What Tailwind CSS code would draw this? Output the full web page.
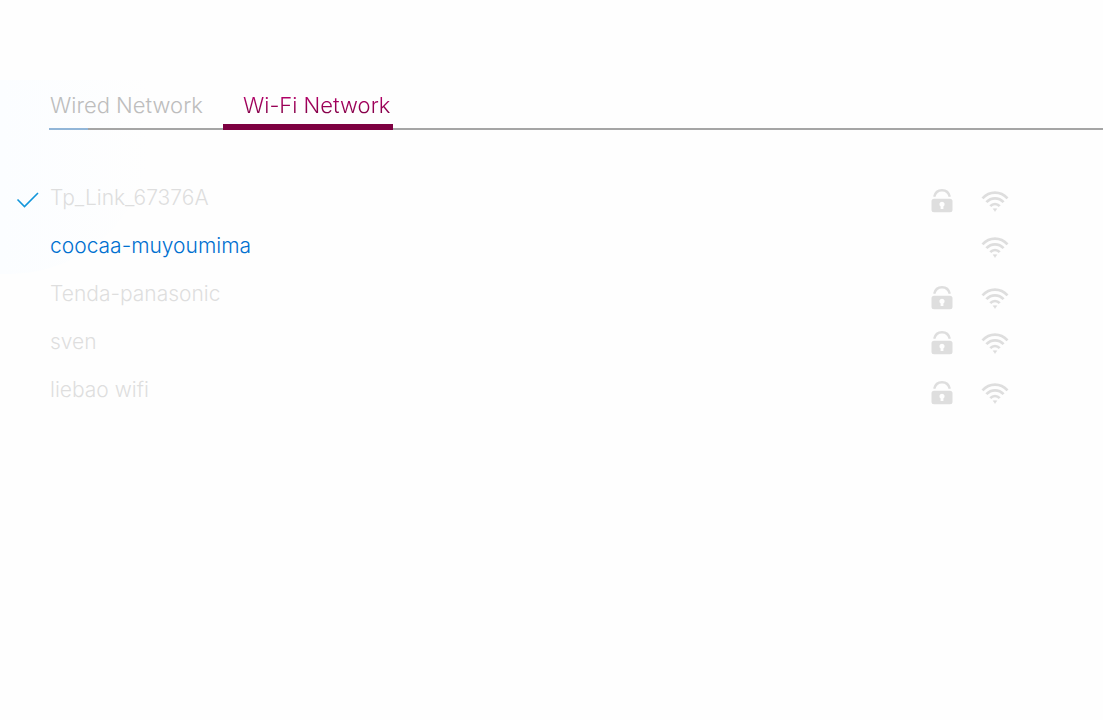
<!DOCTYPE html>
<html lang="en">
<head>
<meta charset="utf-8">
<meta name="viewport" content="width=device-width, initial-scale=1">
<title>Network</title>
<script src="https://cdn.jsdelivr.net/npm/@tailwindcss/browser@4"></script>
</head>
<body class="relative min-h-screen overflow-x-hidden bg-[#fefefe] pt-20 font-['Inter','Liberation_Sans',sans-serif] text-[22px] leading-[30px] font-light text-[#dedede]">
<svg width="0" height="0" class="absolute" aria-hidden="true">
  <symbol id="lock" viewBox="0 0 24 26">
    <path d="M4.200 8.800C5.200 4.500 8.200 2.300 12 2.300S18.800 4.500 19.800 8.800" fill="none" stroke="currentColor" stroke-width="2.400"/>
    <path fill="currentColor" fill-rule="evenodd" d="M4 10.800H20a2.500 2.500 0 0 1 2.500 2.500V21.700A2.500 2.500 0 0 1 20 24.200H4A2.500 2.500 0 0 1 1.500 21.700V13.300A2.500 2.500 0 0 1 4 10.800ZM12 13.700a2.600 2.600 0 0 0-1.400 4.800V21h2.800V18.500A2.600 2.600 0 0 0 12 13.700Z"/>
  </symbol>
  <symbol id="wifi" viewBox="0 0 28 24">
    <g fill="none" stroke="currentColor" stroke-width="2.700">
      <path d="M1.500 9.300C8.500 1.600 19.500 1.600 26.500 9.300"/>
      <path d="M5.400 13.200C10.200 8 17.800 8 22.600 13.200"/>
      <path d="M9.300 17.100C11.900 14.300 16.100 14.300 18.700 17.100"/>
    </g>
    <path d="M12.200 19.700H15.800L14 22.400Z" fill="currentColor" stroke="currentColor" stroke-width=".6" stroke-linejoin="round"/>
  </symbol>
</svg>
<div class="absolute left-0 top-20 h-[194px] w-[150px] rounded-br-[140px] bg-linear-to-r from-[#fbfdff] to-[#fefefe]" aria-hidden="true"></div>

<main class="relative">
  <div role="tablist" class="ml-[49px] flex h-[50px] bg-[linear-gradient(to_right,#92b6d8_39px,#a5a5a5_39px)] bg-[length:100%_2px] bg-bottom bg-no-repeat">
    <button role="tab" aria-selected="false" class="w-[174px] pl-px text-left text-[#bdbdbd]">Wired Network</button>
    <button role="tab" aria-selected="true" class="w-[170px] border-b-6 border-[#7d0041] pt-1.5 pl-5 text-left whitespace-nowrap"><span class="bg-linear-to-b from-[#c00070] to-[#780040] bg-clip-text text-transparent">Wi-Fi Network</span></button>
  </div>

  <ul class="mt-[44px] pr-[94px] text-[21px]">
    <li><button class="flex h-12 w-full items-center text-left">
      <svg class="mt-1 ml-4 h-6 w-6" viewBox="0 0 24 24" fill="none" stroke="#1296db" stroke-width="1.600" aria-label="Connected"><path d="M1.500 11.500L8.500 18.500L22 5"/></svg>
      <span class="ml-2.5 flex-1">Tp_Link_67376A</span>
      <svg class="mt-1.5 mr-[27px] h-[26px] w-6" aria-label="Secured"><use href="#lock"/></svg>
      <svg class="mt-1.5 h-6 w-7" aria-label="Signal"><use href="#wifi"/></svg>
    </button></li>
    <li><button class="flex h-12 w-full items-center pl-[50px] text-left">
      <span class="flex-1 text-[#0070d0]">coocaa-muyoumima</span>
      <svg class="mt-0.5 h-6 w-7" aria-label="Signal"><use href="#wifi"/></svg>
    </button></li>
    <li><button class="flex h-12 w-full items-center pl-[50px] text-left">
      <span class="flex-1">Tenda-panasonic</span>
      <svg class="mt-2 mr-[27px] h-[26px] w-6" aria-label="Secured"><use href="#lock"/></svg>
      <svg class="mt-2 h-6 w-7" aria-label="Signal"><use href="#wifi"/></svg>
    </button></li>
    <li><button class="flex h-12 w-full items-center pl-[50px] text-left">
      <span class="flex-1">sven</span>
      <svg class="mt-0.5 mr-[27px] h-[26px] w-6" aria-label="Secured"><use href="#lock"/></svg>
      <svg class="mt-0.5 h-6 w-7" aria-label="Signal"><use href="#wifi"/></svg>
    </button></li>
    <li><button class="flex h-12 w-full items-center pl-[50px] text-left">
      <span class="flex-1">liebao wifi</span>
      <svg class="mt-1.5 mr-[27px] h-[26px] w-6" aria-label="Secured"><use href="#lock"/></svg>
      <svg class="mt-1.5 h-6 w-7" aria-label="Signal"><use href="#wifi"/></svg>
    </button></li>
  </ul>
</main>
</body>
</html>
